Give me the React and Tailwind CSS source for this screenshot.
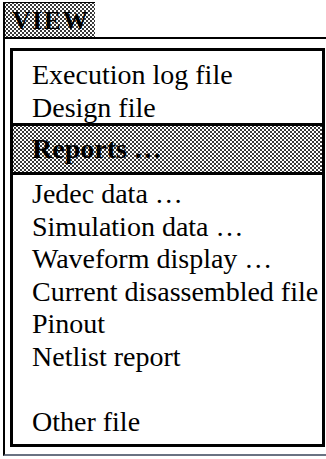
import React from 'react';

const dots =
    'bg-white bg-[radial-gradient(circle,#111_0.65px,transparent_1px),radial-gradient(circle,#111_0.65px,transparent_1px)] bg-[length:4px_4px] bg-[position:0_0,2px_2px]';

const MenuItem = ({ children }) => (
    <div className="h-[32.5px] leading-[33px] whitespace-nowrap">{children}</div>
);

const App = () => {
    const topItems = ['Execution log file', 'Design file'];
    const reportItems = [
        'Jedec data …',
        'Simulation data …',
        'Waveform display …',
        'Current disassembled file',
        'Pinout',
        'Netlist report',
    ];

    return (
        <div className="w-[326px] h-[459px] bg-white overflow-hidden text-black font-['Liberation_Serif','Times_New_Roman',serif]">
            {/* VIEW tab */}
            <div className={`ml-[3px] mt-[2px] w-[92px] h-[35px] border-l-2 border-t border-black flex items-center justify-center ${dots}`}>
                <span className="text-[25px] font-bold tracking-[2px] leading-none pl-[2px]">VIEW</span>
            </div>

            {/* outer frame */}
            <div className="ml-[3px] w-[340px] border-l-2 border-t-2 border-b-2 border-t-black border-l-black border-b-gray-500 pl-[5px] pt-[9px] pb-[7px]">
                <div className="w-[315px] border-[3px] border-black text-[28px]">
                    <div className="pl-[19px] pt-[7px] border-b-[3px] border-black">
                        {topItems.map((item) => (
                            <MenuItem key={item}>{item}</MenuItem>
                        ))}
                    </div>

                    <div className={`h-[49px] pl-[19px] border-b-[3px] border-black flex items-center ${dots}`}>
                        <span className="font-bold leading-none">Reports …</span>
                    </div>

                    <div className="pl-[19px] pt-[2px] pb-[7px]">
                        {reportItems.map((item) => (
                            <MenuItem key={item}>{item}</MenuItem>
                        ))}
                        <div className="h-[32.5px]" />
                        <MenuItem>Other file</MenuItem>
                    </div>
                </div>
            </div>
        </div>
    );
};

export default App;
